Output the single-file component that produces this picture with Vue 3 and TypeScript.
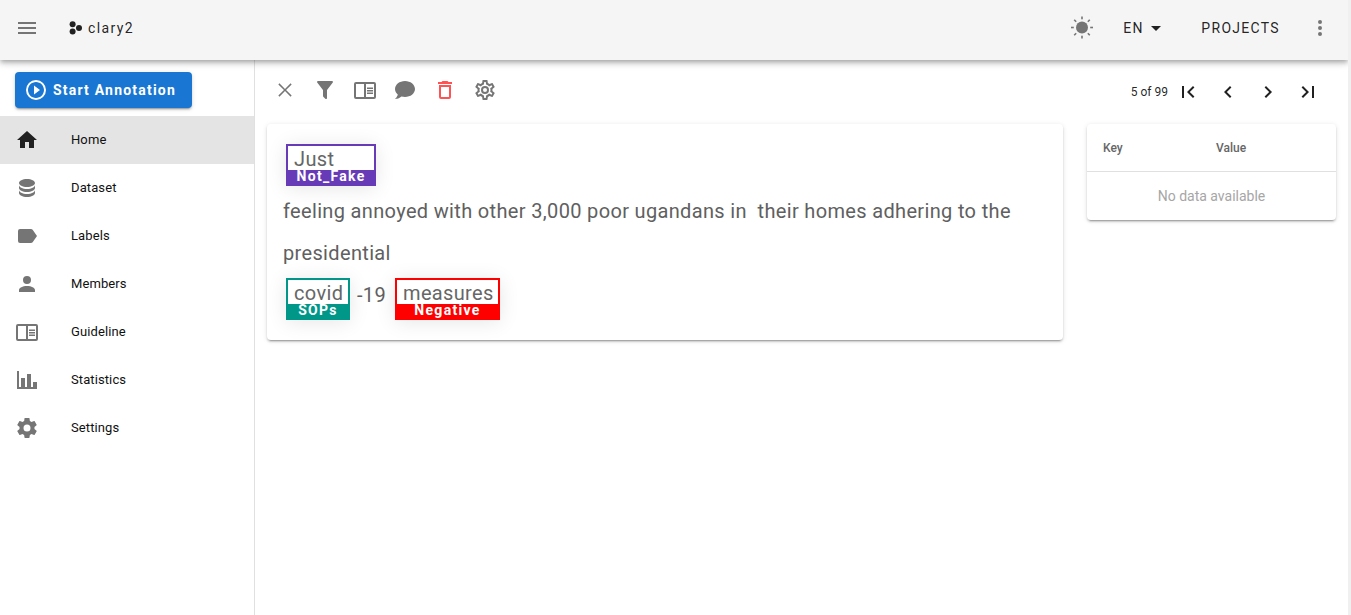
<script setup lang="ts">
interface NavItem { label: string; icon: string; active?: boolean }
interface Action { icon: string; label: string; tone?: string }

const cogOuter = 'M19.43,12.97C19.47,12.65 19.5,12.33 19.5,12C19.5,11.67 19.47,11.34 19.43,11L21.54,9.37C21.73,9.22 21.78,8.95 21.66,8.73L19.66,5.27C19.54,5.05 19.27,4.96 19.05,5.05L16.56,6.05C16.04,5.66 15.5,5.32 14.87,5.07L14.5,2.42C14.46,2.18 14.25,2 14,2H10C9.75,2 9.54,2.18 9.5,2.42L9.13,5.07C8.5,5.32 7.96,5.66 7.44,6.05L4.95,5.05C4.73,4.96 4.46,5.05 4.34,5.27L2.34,8.73C2.21,8.95 2.27,9.22 2.46,9.37L4.57,11C4.53,11.34 4.5,11.67 4.5,12C4.5,12.33 4.53,12.65 4.57,12.97L2.46,14.63C2.27,14.78 2.21,15.05 2.34,15.27L4.34,18.73C4.46,18.95 4.73,19.03 4.95,18.95L7.44,17.94C7.96,18.34 8.5,18.68 9.13,18.93L9.5,21.58C9.54,21.82 9.75,22 10,22H14C14.25,22 14.46,21.82 14.5,21.58L14.87,18.93C15.5,18.67 16.04,18.34 16.56,17.94L19.05,18.95C19.27,19.03 19.54,18.95 19.66,18.73L21.66,15.27C21.78,15.05 21.73,14.78 21.54,14.63L19.43,12.97Z'

const icons: Record<string, string> = {
  menu: 'M3,6H21V8H3V6M3,11H21V13H3V11M3,16H21V18H3V16Z',
  down: 'M7,10L12,15L17,10H7Z',
  dots: 'M12,16A2,2 0 0,1 14,18A2,2 0 0,1 12,20A2,2 0 0,1 10,18A2,2 0 0,1 12,16M12,10A2,2 0 0,1 14,12A2,2 0 0,1 12,14A2,2 0 0,1 10,12A2,2 0 0,1 12,10M12,4A2,2 0 0,1 14,6A2,2 0 0,1 12,8A2,2 0 0,1 10,6A2,2 0 0,1 12,4Z',
  play: 'M12,20C7.59,20 4,16.41 4,12C4,7.59 7.59,4 12,4C16.41,4 20,7.59 20,12C20,16.41 16.41,20 12,20M12,2A10,10 0 0,0 2,12A10,10 0 0,0 12,22A10,10 0 0,0 22,12A10,10 0 0,0 12,2M10,16.5L16,12L10,7.5V16.5Z',
  home: 'M10,20V14H14V20H19V12H22L12,3L2,12H5V20H10Z',
  database: 'M12,3C7.58,3 4,4.79 4,7C4,9.21 7.58,11 12,11C16.42,11 20,9.21 20,7C20,4.79 16.42,3 12,3M4,9V12C4,14.21 7.58,16 12,16C16.42,16 20,14.21 20,12V9C20,11.21 16.42,13 12,13C7.58,13 4,11.21 4,9M4,14V17C4,19.21 7.58,21 12,21C16.42,21 20,19.21 20,17V14C20,16.21 16.42,18 12,18C7.58,18 4,16.21 4,14Z',
  label: 'M17.63,5.84C17.27,5.33 16.67,5 16,5H5A2,2 0 0,0 3,7V17A2,2 0 0,0 5,19H16C16.67,19 17.27,18.66 17.63,18.15L22,12L17.63,5.84Z',
  account: 'M12,4A4,4 0 0,1 16,8A4,4 0 0,1 12,12A4,4 0 0,1 8,8A4,4 0 0,1 12,4M12,14C16.42,14 20,15.79 20,18V20H4V18C4,15.79 7.58,14 12,14Z',
  reader: 'M21,4H3A2,2 0 0,0 1,6V19A2,2 0 0,0 3,21H21A2,2 0 0,0 23,19V6A2,2 0 0,0 21,4M3,19V6H11V19H3M21,19H13V6H21V19M14,9.5H20V11H14V9.5M14,12H20V13.5H14V12M14,14.5H20V16H14V14.5Z',
  chart: 'M22,21H2V3H4V19H6V10H10V19H12V6H16V19H18V14H22V21Z',
  cog: 'M12,15.5A3.5,3.5 0 0,1 8.5,12A3.5,3.5 0 0,1 12,8.5A3.5,3.5 0 0,1 15.5,12A3.5,3.5 0 0,1 12,15.5' + cogOuter,
  close: 'M6.4,5.35L5.35,6.4L10.95,12L5.35,17.6L6.4,18.65L12,13.05L17.6,18.65L18.65,17.6L13.05,12L18.65,6.4L17.6,5.35L12,10.95L6.4,5.35Z',
  filter: 'M14,12V19.88C14.04,20.18 13.94,20.5 13.71,20.71C13.32,21.1 12.69,21.1 12.3,20.71L10.29,18.7C10.06,18.47 9.96,18.16 10,17.87V12H9.97L4.21,4.62C3.87,4.19 3.95,3.56 4.38,3.22C4.57,3.08 4.78,3 5,3H19C19.22,3 19.43,3.08 19.62,3.22C20.05,3.56 20.13,4.19 19.79,4.62L14.03,12H14Z',
  chat: 'M12,3C17.5,3 22,6.58 22,11C22,15.42 17.5,19 12,19C10.76,19 9.57,18.82 8.47,18.5C5.55,21 2,21 2,21C4.33,18.67 4.7,17.1 4.75,16.5C3.05,15.07 2,13.13 2,11C2,6.58 6.5,3 12,3Z',
  trash: 'M6,19A2,2 0 0,0 8,21H16A2,2 0 0,0 18,19V7H6V19M8,9H16V19H8V9M15.5,4L14.5,3H9.5L8.5,4H5V6H19V4H15.5Z',
  cogOutline: 'M12,8A4,4 0 0,1 16,12A4,4 0 0,1 12,16A4,4 0 0,1 8,12A4,4 0 0,1 12,8M12,10A2,2 0 0,0 10,12A2,2 0 0,0 12,14A2,2 0 0,0 14,12A2,2 0 0,0 12,10M10,22C9.75,22 9.54,21.82 9.5,21.58L9.13,18.93C8.5,18.68 7.96,18.34 7.44,17.94L4.95,18.95C4.73,19.03 4.46,18.95 4.34,18.73L2.34,15.27C2.21,15.05 2.27,14.78 2.46,14.63L4.57,12.97L4.5,12L4.57,11L2.46,9.37C2.27,9.22 2.21,8.95 2.34,8.73L4.34,5.27C4.46,5.05 4.73,4.96 4.95,5.05L7.44,6.05C7.96,5.66 8.5,5.32 9.13,5.07L9.5,2.42C9.54,2.18 9.75,2 10,2H14C14.25,2 14.46,2.18 14.5,2.42L14.87,5.07C15.5,5.32 16.04,5.66 16.56,6.05L19.05,5.05C19.27,4.96 19.54,5.05 19.66,5.27L21.66,8.73C21.79,8.95 21.73,9.22 21.54,9.37L19.43,11L19.5,12L19.43,13L21.54,14.63C21.73,14.78 21.79,15.05 21.66,15.27L19.66,18.73C19.54,18.95 19.27,19.04 19.05,18.95L16.56,17.95C16.04,18.34 15.5,18.68 14.87,18.93L14.5,21.58C14.46,21.82 14.25,22 14,22H10M11.25,4L10.88,6.61C9.68,6.86 8.62,7.5 7.85,8.39L5.44,7.35L4.69,8.65L6.8,10.2C6.4,11.37 6.4,12.64 6.8,13.8L4.68,15.36L5.43,16.66L7.86,15.62C8.63,16.5 9.68,17.14 10.87,17.38L11.24,20H12.76L13.13,17.39C14.32,17.14 15.37,16.5 16.14,15.62L18.57,16.66L19.32,15.36L17.2,13.81C17.6,12.64 17.6,11.37 17.2,10.2L19.31,8.65L18.56,7.35L16.15,8.39C15.38,7.5 14.32,6.86 13.12,6.62L12.75,4H11.25Z',
  first: 'M18.41,16.59L13.82,12L18.41,7.41L17,6L11,12L17,18L18.41,16.59M6,6H8V18H6V6Z',
  prev: 'M15.41,16.58L10.83,12L15.41,7.41L14,6L8,12L14,18L15.41,16.58Z',
  next: 'M8.59,16.58L13.17,12L8.59,7.41L10,6L16,12L10,18L8.59,16.58Z',
  last: 'M5.59,7.41L10.18,12L5.59,16.59L7,18L13,12L7,6L5.59,7.41M16,6H18V18H16V6Z',
}

const nav: NavItem[] = [
  { label: 'Home', icon: 'home', active: true },
  { label: 'Dataset', icon: 'database' },
  { label: 'Labels', icon: 'label' },
  { label: 'Members', icon: 'account' },
  { label: 'Guideline', icon: 'reader' },
  { label: 'Statistics', icon: 'chart' },
  { label: 'Settings', icon: 'cog' },
]

const actions: Action[] = [
  { icon: 'close', label: 'Clear' },
  { icon: 'filter', label: 'Filter' },
  { icon: 'reader', label: 'Guideline' },
  { icon: 'chat', label: 'Comments' },
  { icon: 'trash', label: 'Delete', tone: 'danger' },
  { icon: 'cogOutline', label: 'Settings' },
]

const pager: string[] = ['first', 'prev', 'next', 'last']
const rays: number[] = [0, 45, 90, 135, 180, 225, 270, 315]
</script>

<template>
  <div class="app">
    <header class="topbar">
      <svg class="icon" viewBox="0 0 24 24"><path :d="icons.menu" /></svg>
      <div class="brand">
        <svg class="logo" viewBox="0 0 14 14">
          <circle cx="3.6" cy="3.3" r="3" />
          <circle cx="3.6" cy="10.5" r="3" />
          <circle cx="10" cy="7" r="3" />
        </svg>
        <span class="brand-name">clary2</span>
      </div>
      <div class="spacer"></div>
      <svg class="icon sun" viewBox="0 0 24 24">
        <circle cx="12" cy="11.5" r="6" />
        <rect v-for="r in rays" :key="r" x="11.2" y="0.5" width="1.6" height="2.8" :transform="`rotate(${r} 12 11.5)`" />
      </svg>
      <button class="text-btn lang">EN<svg class="icon caret" viewBox="0 0 24 24"><path :d="icons.down" /></svg></button>
      <button class="text-btn projects">PROJECTS</button>
      <svg class="icon" viewBox="0 0 24 24"><path :d="icons.dots" /></svg>
    </header>

    <div class="body">
      <aside class="sidebar">
        <button class="start">
          <svg class="icon" viewBox="0 0 24 24"><path :d="icons.play" /></svg>Start Annotation
        </button>
        <nav>
          <a v-for="n in nav" :key="n.label" class="nav-item" :class="{ active: n.active }">
            <svg class="icon" viewBox="0 0 24 24"><path :d="icons[n.icon]" /></svg>
            <span>{{ n.label }}</span>
          </a>
        </nav>
      </aside>

      <main class="main">
        <div class="toolbar">
          <div class="actions">
            <svg v-for="a in actions" :key="a.label" class="icon" :class="a.tone" viewBox="0 0 24 24" :aria-label="a.label"><path :d="icons[a.icon]" /></svg>
          </div>
          <div class="pager">
            <span class="count">5 of 99</span>
            <svg v-for="p in pager" :key="p" class="icon" viewBox="0 0 24 24"><path :d="icons[p]" /></svg>
          </div>
        </div>

        <div class="columns">
          <section class="card document">
            <div class="entity-row">
              <span class="entity purple w-just"><span class="word">Just</span><span class="tag">Not_Fake</span></span>
            </div>
            <p class="text">feeling annoyed with other 3,000 poor ugandans in&nbsp; their homes adhering to the presidential</p>
            <div class="entity-row">
              <span class="entity teal w-covid"><span class="word">covid</span><span class="tag">SOPs</span></span>
              <span class="between">-19</span>
              <span class="entity red w-measures"><span class="word">measures</span><span class="tag">Negative</span></span>
            </div>
          </section>

          <section class="card meta">
            <div class="meta-head"><span>Key</span><span>Value</span></div>
            <div class="meta-empty">No data available</div>
          </section>
        </div>
      </main>
    </div>
  </div>
</template>

<style>
body { margin: 0; background: #f0f0f0; overflow: hidden; }
</style>

<style scoped>
.app { width: 1348px; height: 615px; background: #fff; overflow: hidden; display: flex; flex-direction: column; font-family: Roboto, "Liberation Sans", sans-serif; color: rgba(0, 0, 0, .87); }
.app * { box-sizing: border-box; }
.icon { width: 24px; height: 24px; flex: none; fill: #757575; display: block; }
button { border: 0; background: none; font-family: inherit; color: inherit; padding: 0; margin: 0; display: flex; align-items: center; }

.topbar { height: 60px; flex: none; background: #f5f5f5; display: flex; align-items: center; padding: 0 16px 4px 15px; position: relative; z-index: 2; box-shadow: 0 2px 4px -1px rgba(0, 0, 0, .2), 0 4px 5px rgba(0, 0, 0, .14), 0 1px 10px rgba(0, 0, 0, .12); }
.brand { display: flex; align-items: center; margin-left: 29px; }
.logo { width: 14px; height: 14px; fill: #212121; margin-left: 1px; }
.brand-name { margin-left: 5px; font-size: 14px; letter-spacing: 1.4px; }
.spacer { flex: 1; }
.text-btn { font-size: 14px; letter-spacing: 1.3px; height: 36px; }
.sun { margin-right: 29px; }
.caret { fill: #212121; }
.projects { margin: 0 28px 0 33.5px; }

.body { flex: 1; display: flex; min-height: 0; }
.sidebar { width: 255px; flex: none; border-right: 1px solid #e0e0e0; padding-top: 12px; }
.start { width: 177px; height: 36px; margin: 0 0 8px 15px; padding-left: 9px; background: #1976d2; color: #fff; border-radius: 4px; font-size: 14px; font-weight: 700; letter-spacing: 1.2px; white-space: nowrap; box-shadow: 0 3px 1px -2px rgba(0, 0, 0, .2), 0 2px 2px rgba(0, 0, 0, .14), 0 1px 5px rgba(0, 0, 0, .12); }
.start .icon { fill: #fff; margin-right: 5px; }
.nav-item { height: 48px; display: flex; align-items: center; padding-left: 15px; font-size: 13px; letter-spacing: .1px; color: #111; }
.nav-item span { margin-left: 32px; padding-bottom: 2px; }
.nav-item.active { background: #e4e4e4; }
.nav-item.active .icon { fill: #212121; }

.main { flex: 1; min-width: 0; padding: 0 12px; }
.toolbar { height: 64px; display: flex; justify-content: space-between; }
.actions { display: flex; gap: 16px; padding: 18px 0 0 6px; }
.danger { fill: #ff5252; }
.pager { display: flex; align-items: center; gap: 16px; padding-right: 16px; }
.pager .icon { fill: #212121; }
.count { font-size: 12px; margin-right: -8px; }

.columns { display: flex; align-items: flex-start; gap: 24px; }
.card { background: #fff; border-radius: 4px; box-shadow: 0 3px 1px -2px rgba(0, 0, 0, .2), 0 2px 2px rgba(0, 0, 0, .14), 0 1px 5px rgba(0, 0, 0, .12); }
.document { width: 796px; height: 216px; padding: 20px 16px; font-size: 20px; letter-spacing: .34px; color: #606060; }
.entity-row { display: flex; padding-left: 3px; height: 42px; }
.entity { height: 42px; display: flex; flex-direction: column; border: 2px solid; background: #fff; box-shadow: 0 2px 20px rgba(0, 0, 0, .1); }
.word { height: 24px; line-height: 26px; padding-left: 6px; color: #666; white-space: nowrap; }
.tag { flex: 1; color: #fff; font-size: 14px; line-height: 12px; font-weight: 700; letter-spacing: 1.3px; text-align: center; }
.purple { border-color: #673ab7; }
.purple .tag { background: #673ab7; }
.teal { border-color: #009688; }
.teal .tag { background: #009688; }
.red { border-color: #f00; }
.red .tag { background: #f00; }
.w-just { width: 90px; }
.w-covid { width: 64px; }
.w-measures { width: 105px; }
.text { margin: 4px 0 4px; line-height: 42px; width: 745px; }
.between { width: 45px; padding-left: 7px; line-height: 34px; }

.meta { width: 249px; height: 96px; }
.meta-head { height: 48px; border-bottom: 1px solid #e0e0e0; display: grid; grid-template-columns: 113px 1fr; align-items: center; padding-left: 16px; font-size: 12px; font-weight: 500; color: #666; }
.meta-empty { height: 48px; line-height: 48px; text-align: center; font-size: 14px; color: #a6a6a6; }
</style>
